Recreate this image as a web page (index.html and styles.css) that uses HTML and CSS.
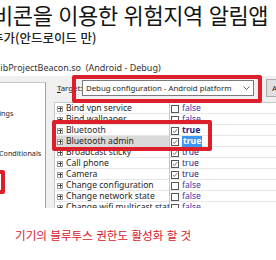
FILE: index.html
```html
<!DOCTYPE html>
<html lang="ko">
<head>
<meta charset="utf-8">
<link rel="stylesheet" href="styles.css">
</head>
<body>
<div class="page">
  <h1 class="title">비콘을 이용한 위험지역 알림앱</h1>
  <p class="subtitle">추가(안드로이드 만)</p>
  <div class="dialog">
    <div class="dlg-title">libProjectBeacon.so&nbsp;&nbsp;(Android - Debug)</div>
    <div class="dlg-body">
      <div class="nav">
        <div class="nav-item nav-settings">Settings</div>
        <div class="nav-item nav-cond">Conditionals</div>
      </div>
      <div class="main">
        <div class="target-row">
          <span class="target-label"><u>T</u>arget:</span>
          <div class="select">
            <span>Debug configuration - Android platform</span>
            <svg class="chev" width="7" height="4" viewBox="0 0 7 4"><path d="M0.5 0.5 L3.5 3.5 L6.5 0.5" fill="none" stroke="#555" stroke-width="0.9"/></svg>
          </div>
          <div class="btn">Apply</div>
        </div>
        <div class="list">
          <div class="row"><div class="name"><span class="plus"></span>Bind vpn service</div><div class="val"><span class="cb"></span><span class="f">false</span></div></div>
          <div class="row"><div class="name"><span class="plus"></span>Bind wallpaper</div><div class="val"><span class="cb"></span><span class="f">false</span></div></div>
          <div class="row"><div class="name"><span class="plus"></span>Bluetooth</div><div class="val"><span class="cb on"><svg viewBox="0 0 8 8"><path d="M1.3 4.2 L3.2 6 L6.8 1.6" fill="none" stroke="#333" stroke-width="0.9"/></svg></span><span class="t b">true</span></div></div>
          <div class="row sel"><div class="name"><span class="plus"></span>Bluetooth admin</div><div class="val"><span class="cb on"><svg viewBox="0 0 8 8"><path d="M1.3 4.2 L3.2 6 L6.8 1.6" fill="none" stroke="#333" stroke-width="0.9"/></svg></span><span class="t hl">true</span></div></div>
          <div class="row"><div class="name"><span class="plus"></span>Broadcast sticky</div><div class="val"><span class="cb on"><svg viewBox="0 0 8 8"><path d="M1.3 4.2 L3.2 6 L6.8 1.6" fill="none" stroke="#333" stroke-width="0.9"/></svg></span><span class="t">true</span></div></div>
          <div class="row"><div class="name"><span class="plus"></span>Call phone</div><div class="val"><span class="cb on"><svg viewBox="0 0 8 8"><path d="M1.3 4.2 L3.2 6 L6.8 1.6" fill="none" stroke="#333" stroke-width="0.9"/></svg></span><span class="t">true</span></div></div>
          <div class="row"><div class="name"><span class="plus"></span>Camera</div><div class="val"><span class="cb on"><svg viewBox="0 0 8 8"><path d="M1.3 4.2 L3.2 6 L6.8 1.6" fill="none" stroke="#333" stroke-width="0.9"/></svg></span><span class="t">true</span></div></div>
          <div class="row"><div class="name"><span class="plus"></span>Change configuration</div><div class="val"><span class="cb"></span><span class="f">false</span></div></div>
          <div class="row"><div class="name"><span class="plus"></span>Change network state</div><div class="val"><span class="cb"></span><span class="f">false</span></div></div>
          <div class="row"><div class="name"><span class="plus"></span>Change wifi multicast state</div><div class="val"><span class="cb"></span><span class="f">false</span></div></div>
        </div>
      </div>
    </div>
  </div>
  <p class="note">기기의 블루투스 권한도 활성화 할 것</p>
  <div class="mark mark-target"></div>
  <div class="mark mark-bt"></div>
  <div class="mark mark-left"></div>
</div>
</body>
</html>
```

FILE: styles.css
```css
* { box-sizing: border-box; }
html, body { margin: 0; padding: 0; background: #fff; }
body { width: 276px; height: 260px; overflow: hidden; }
.page { position: relative; width: 276px; height: 260px; overflow: hidden; }

.title {
  margin: 0 0 0 -7px;
  font: 400 22px/28px "Noto Sans CJK KR", sans-serif;
  letter-spacing: -0.4px;
  color: #141414;
  white-space: nowrap;
}
.subtitle {
  margin: 2px 0 0 -8px;
  font: 500 12.5px/16px "Noto Sans CJK KR", sans-serif;
  color: #222;
  white-space: nowrap;
}

.dialog {
  margin-top: 14px;
  font-family: "Noto Sans", sans-serif;
  font-size: 9px;
  color: #1e1e1e;
}
.dlg-title {
  height: 16px;
  line-height: 16px;
  margin-left: -2px;
  white-space: nowrap;
  color: #333;
  font-size: 9px;
}
.dlg-body {
  display: grid;
  grid-template-columns: 46px 1fr;
  height: 132px;
  background: #f0f0f0;
  overflow: hidden;
}
.nav {
  margin-top: 6px;
  background: #fff;
  border-top: 1px solid #c8c8c8;
  border-right: 1px solid #a0a0a0;
  padding-top: 25px;
  overflow: hidden;
  font-size: 7.2px;
}
.nav-item { height: 11px; line-height: 11px; white-space: nowrap; }
.nav-settings { text-indent: -14px; }
.nav-cond { margin-top: 29px; text-indent: -1px; }

.main { padding-left: 8px; min-width: 0; }
.target-row {
  display: flex;
  align-items: center;
  margin-top: 4px;
  height: 16px;
  font-size: 7.8px;
}
.target-label { width: 28px; padding-left: 3px; flex: none; }
.select {
  flex: none;
  width: 172px;
  height: 16px;
  border: 1px solid #7a7a7a;
  background: #fff;
  display: flex;
  align-items: center;
  justify-content: space-between;
  padding: 0 3px 0 3px;
  white-space: nowrap;
}
.chev { display: block; }
.btn {
  flex: none;
  margin-left: 12px;
  width: 40px;
  height: 18px;
  line-height: 16px;
  border: 1px solid #adadad;
  background: #e1e1e1;
  padding-left: 5px;
}

.list {
  margin-top: 6px;
  background: #fff;
  border-left: 1px solid #c8c8c8;
  border-top: 1px solid #c8c8c8;
}
.row {
  display: grid;
  grid-template-columns: 114px 1fr;
  height: 11px;
  line-height: 11px;
  font-size: 8.6px;
  background: linear-gradient(#e6e6e6, #e6e6e6) bottom / 100% 1px no-repeat;
}
.name {
  display: flex;
  align-items: center;
  padding-left: 2px;
  white-space: nowrap;
  overflow: hidden;
}
.row.sel .name { background: #dadada; }
.plus {
  flex: none;
  width: 6px;
  height: 6px;
  border: 1px solid #9a9a9a;
  margin-right: 3px;
  background:
    linear-gradient(#444, #444) center / 4px 1px no-repeat,
    linear-gradient(#444, #444) center / 1px 4px no-repeat,
    #fff;
}
.val {
  display: flex;
  align-items: center;
  border-left: 1px solid #c8c8c8;
  padding-left: 1px;
}
.cb {
  flex: none;
  width: 8px;
  height: 8px;
  border: 1px solid #555;
  margin-right: 3px;
  background: #fff;
  display: flex;
}
.cb svg { width: 100%; height: 100%; display: block; }
.t { color: #1a237e; }
.t.b { font-weight: 700; }
.t.hl { background: #3d97f5; color: #fff; font-weight: 700; padding: 0 1px; }
.f { color: #3a3ab0; }

.note {
  margin: 17px 0 0 15px;
  font: 400 11.6px/20px "Noto Sans CJK KR", sans-serif;
  color: #d8182c;
  white-space: nowrap;
}

.mark {
  position: absolute;
  border: 4px solid #dc1f2b;
  border-radius: 2px;
}
.mark-target { left: 72px; top: 75px; width: 190px; height: 28px; }
.mark-bt { left: 52px; top: 120px; width: 160px; height: 31px; }
.mark-left { left: -20px; top: 170px; width: 25px; height: 24px; }
```
